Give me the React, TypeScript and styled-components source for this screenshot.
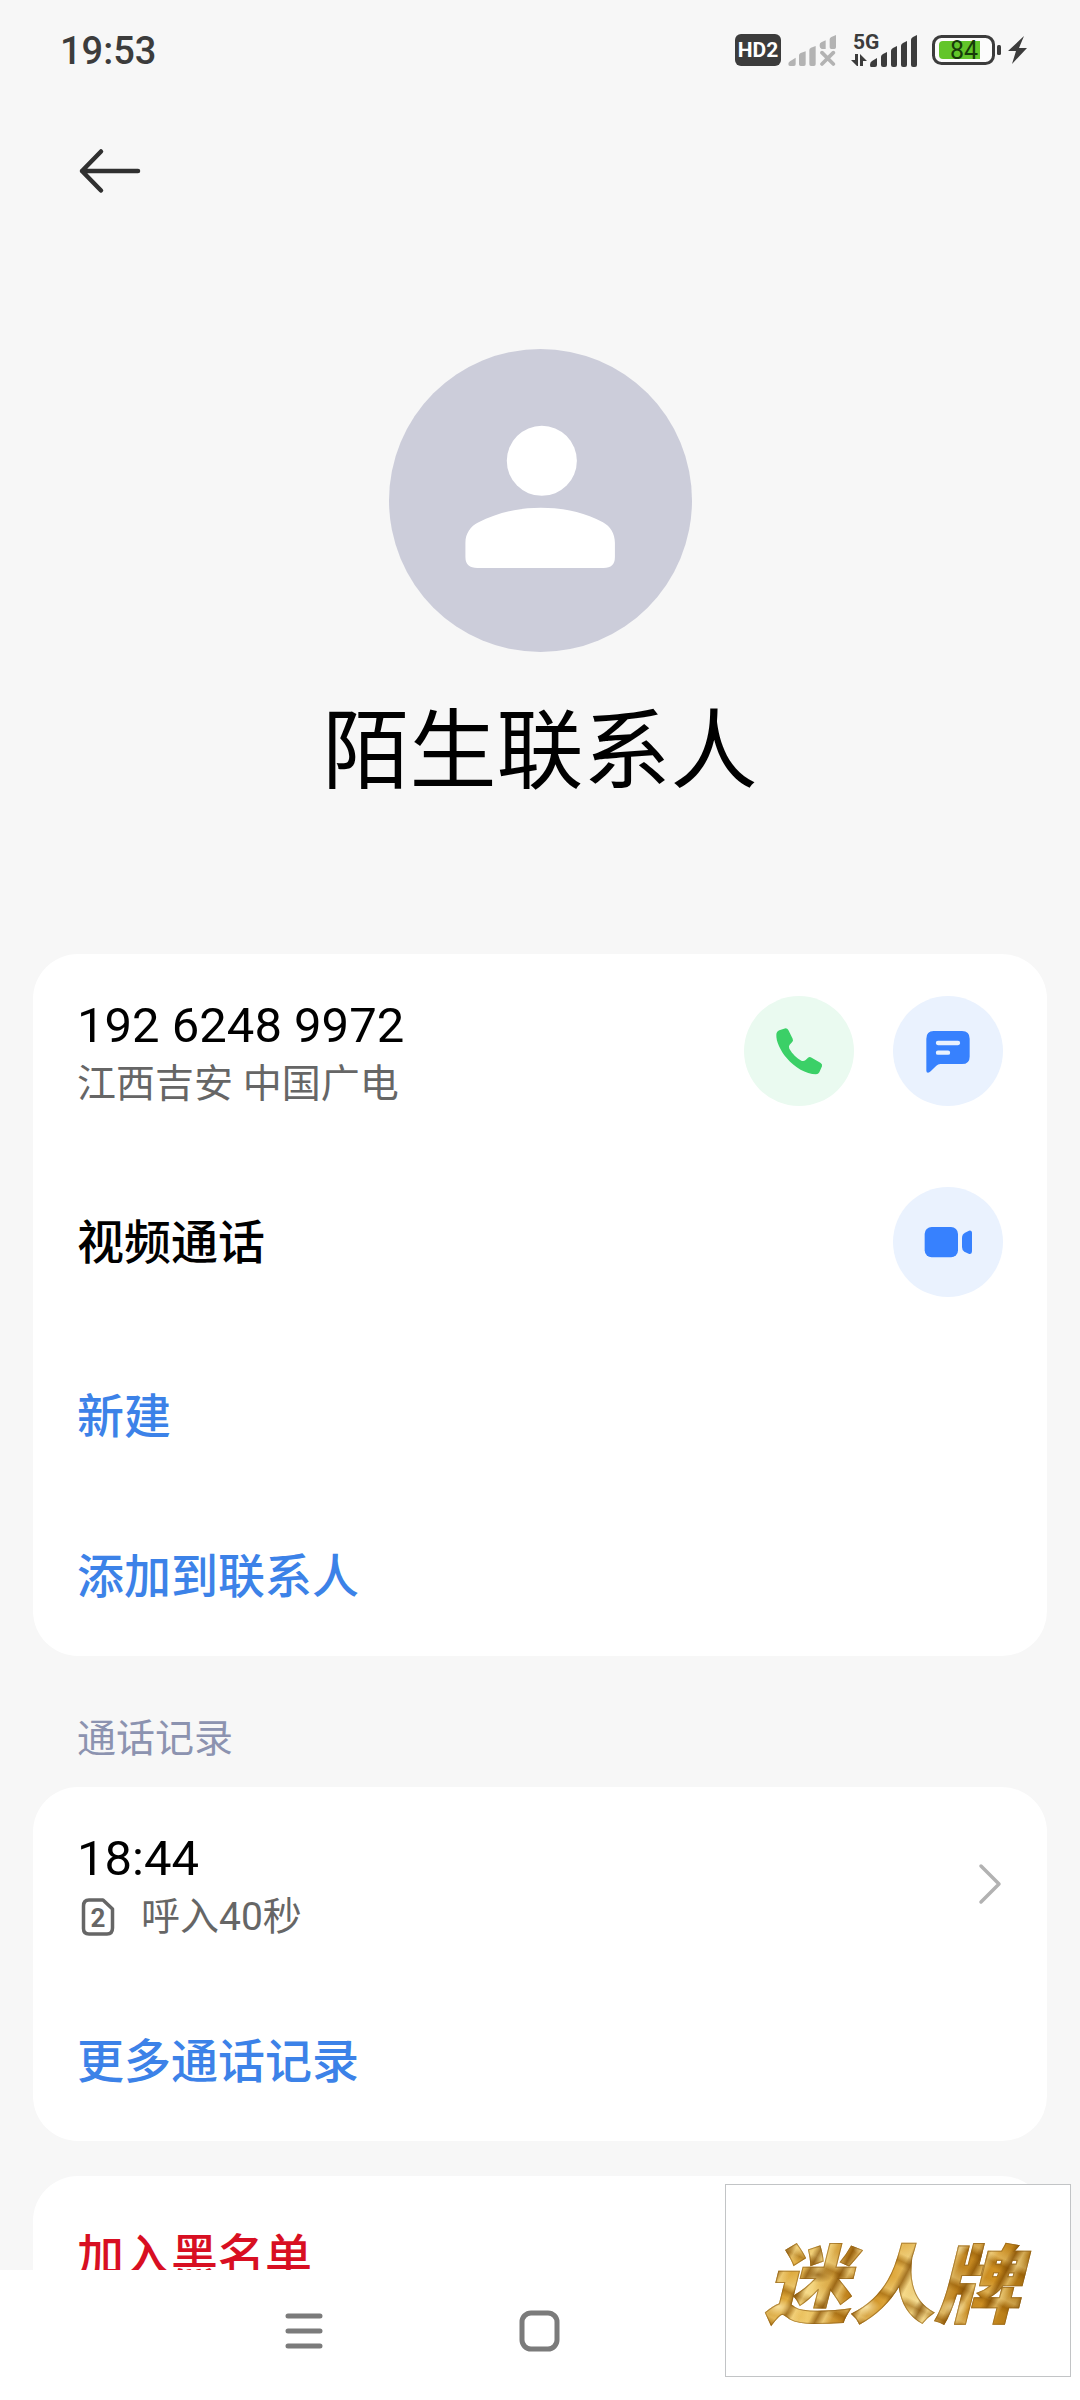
import React from "react";
import styled, { createGlobalStyle } from "styled-components";

const latin = `Roboto, "Noto Sans CJK SC", sans-serif`;
const ink = "#3c3c3c";

const GlobalStyle = createGlobalStyle`
  *, *::before, *::after { box-sizing: border-box; }
  body {
    margin: 0;
    background: #f7f7f7;
    color: #000;
    font-family: ${latin};
  }
  button { font: inherit; color: inherit; border: 0; background: none; padding: 0; cursor: pointer; }
  h1, h2, p { margin: 0; font-weight: 400; }
  svg { display: block; flex: none; }
`;

const Screen = styled.div`
  display: flex;
  flex-direction: column;
  height: 100vh;
  overflow: hidden;
`;

const StatusBar = styled.header`
  display: flex;
  align-items: center;
  justify-content: space-between;
  height: 100px;
  padding: 0 52px 0 60px;
  color: ${ink};
  flex: none;
`;

const Clock = styled.time`
  padding-top: 2px;
  font-size: 38px;
  line-height: 48px;
  font-weight: 500;
`;

const StatusIcons = styled.div`
  display: flex;
  align-items: center;
  gap: 7px;
`;

const HdBadge = styled.span`
  width: 46px;
  height: 32px;
  border-radius: 6px;
  background: ${ink};
  color: #fff;
  font-size: 21px;
  line-height: 32px;
  font-weight: 700;
  text-align: center;
`;

const TopBar = styled.div`
  display: flex;
  align-items: center;
  height: 142px;
  padding: 0 78px;
  flex: none;
`;

const Content = styled.main`
  flex: 1;
  min-height: 0;
  overflow: hidden;
`;

const Profile = styled.section`
  display: flex;
  flex-direction: column;
  align-items: center;
  gap: 36px;
  padding: 107px 33px 138px;
`;

const Name = styled.h1`
  font-size: 87px;
  line-height: 128px;
`;

const Card = styled.section`
  margin: 0 33px;
  border-radius: 45px;
  background: #fff;
  & + & { margin-top: 35px; }
`;

const Row = styled.div<{ $height: number }>`
  display: flex;
  align-items: center;
  justify-content: space-between;
  height: ${(p) => p.$height}px;
  padding: 0 44px;
`;

const RowButton = styled.button`
  display: flex;
  align-items: center;
  justify-content: space-between;
  width: 100%;
  height: 194px;
  padding: 0 44px;
  text-align: left;
`;

const ActionRow = styled.button<{ $color: string }>`
  display: block;
  width: 100%;
  height: 160px;
  padding: 2px 44px 0;
  text-align: left;
  font-size: 47px;
  line-height: 64px;
  font-weight: 500;
  color: ${(p) => p.$color};
`;

const Lines = styled.span`
  display: flex;
  flex-direction: column;
  padding-top: 2px;
`;

const Primary = styled.span`
  font-size: 49px;
  line-height: 64px;
`;

const Label = styled.span`
  padding-top: 2px;
  font-size: 47px;
  line-height: 64px;
  font-weight: 500;
`;

const Secondary = styled.span`
  display: flex;
  align-items: center;
  gap: 24px;
  font-size: 39px;
  line-height: 52px;
  color: #666;
`;

const SectionTitle = styled.h2`
  padding: 57px 77px 22px;
  font-size: 39px;
  line-height: 52px;
  color: #8c93b0;
`;

const Actions = styled.div`
  display: flex;
  gap: 39px;
`;

const RoundButton = styled.button<{ $tint: string }>`
  width: 110px;
  height: 110px;
  border-radius: 50%;
  background: ${(p) => p.$tint};
`;

const NavBar = styled.nav`
  display: grid;
  grid-template-columns: repeat(3, 235px);
  justify-content: center;
  height: 130px;
  padding-bottom: 9px;
  background: #fff;
  flex: none;
`;

const NavButton = styled.button`
  display: grid;
  place-items: center;
`;

const Watermark = styled.aside`
  position: absolute;
  right: 9px;
  bottom: 23px;
  display: grid;
  place-items: center;
  width: 346px;
  height: 193px;
  padding: 0 12px 4px 0;
  border: 1px solid #c2c4c6;
  background: #fff;
`;

const Brand = styled.span`
  padding: 0 12px;
  font-family: "Noto Sans CJK SC", sans-serif;
  font-size: 85px;
  line-height: 112px;
  font-weight: 900;
  font-style: italic;
  color: transparent;
  -webkit-text-stroke: 1px #8a5a1099;
  background:
    radial-gradient(ellipse 14px 9px at 30% 40%, #fff0b8cc, transparent),
    radial-gradient(ellipse 16px 8px at 60% 70%, #7a4600aa, transparent),
    repeating-linear-gradient(118deg, #7a460000 0 9px, #7a460099 15px, #ffe9a077 22px, #7a460000 29px),
    repeating-linear-gradient(24deg, #7a460000 0 11px, #8a520077 17px, #fff0b055 24px, #7a460000 37px),
    linear-gradient(100deg, #a96f0c, #d9a030 14%, #efca6c 24%, #b8760f 38%, #dfa83c 50%, #f0d587 60%, #c08420 72%, #cf9022 84%, #925d06);
  background-size: 88px 60px, 110px 74px, auto, auto, auto;
  -webkit-background-clip: text;
  background-clip: text;
`;

const WeakSignal = () => (
  <svg width="48" height="32" viewBox="261 72 144 96" fill="#b3b3b3" aria-hidden="true">
    <path d="M262 162q0-5 5-8l17-11v20q0 5-5 5h-12q-5 0-5-6zM294 136q0-5 5-7l15-5v39q0 5-5 5h-10q-5 0-5-5zM325 120q0-5 5-7l14-5v55q0 5-5 5h-9q-5 0-5-5z" />
    <path d="M356 104q0-5 5-7l13-6v26h-12q-6-3-6-8zM386 88q0-5 5-7l14-6v37q0 5-5 5h-9q-5 0-5-5z" />
    <path d="M363 128l34 34M397 128l-34 34" stroke="#b3b3b3" strokeWidth="11" strokeLinecap="round" />
  </svg>
);

const StrongSignal = () => (
  <svg width="68" height="52" viewBox="0 -8 68 52" fill={ink} aria-label="5G">
    <text x="3" y="17" fontSize="21" fontWeight="700" fontFamily="Roboto, sans-serif">5G</text>
    <path d="M1 28h4v-6h3v12H7zM10 22l7 7h-4v5h-3z" />
    <path d="M20 33q0-3 2-4l5-3v7q0 2-2 2h-4q-1 0-1-2zM31 25q0-2 2-3l4-2v13q0 2-2 2h-2q-2 0-2-2zM41 19q0-2 2-3l4-2v19q0 2-2 2h-2q-2 0-2-2zM51 14q0-2 2-3l4-2v24q0 2-2 2h-2q-2 0-2-2zM61 8q0-2 2-3l4-2v30q0 2-2 2h-2q-2 0-2-2z" />
  </svg>
);

const Battery = () => (
  <svg width="96" height="32" viewBox="0 0 96 32" aria-label="84%">
    <rect x="1.5" y="2.5" width="60" height="27" rx="8" fill="#fcfcfc" stroke={ink} strokeWidth="3" />
    <path d="M11 7h37v18H11q-4 0-4-4V11q0-4 4-4z" fill="#62c52a" />
    <text x="32" y="25" textAnchor="middle" fontSize="25" fontFamily="Roboto, sans-serif" fill="#183b0a">84</text>
    <rect x="65" y="11" width="4" height="10" rx="1.5" fill={ink} />
    <path d="M92 2L76 17h8l-4 13 15-16h-8z" fill={ink} />
  </svg>
);

const BackArrow = () => (
  <svg width="64" height="48" viewBox="0 0 64 48" fill="none" stroke="#303030" strokeWidth="4.5" strokeLinecap="round" strokeLinejoin="round">
    <path d="M60 24H4M23 4.500L4 24l19 19.500" />
  </svg>
);

const Avatar = () => (
  <svg width="303" height="303" viewBox="85 57 908 908" role="img" aria-label="头像">
    <circle cx="539" cy="511" r="454" fill="#cccdda" />
    <circle cx="543" cy="392" r="105" fill="#fff" />
    <path d="M314 638C314 609 330 588 352 577C411 547 470 533 540 533C610 533 667 546 726 576C748 588 762 610 762 638V680Q762 713 728 713H350Q314 713 314 680Z" fill="#fff" />
  </svg>
);

const PhoneIcon = () => (
  <svg width="110" height="110" viewBox="132 167 330 330" fill="#3bd067">
    <path d="M229 283C229 277 232 273 238 270L252 265Q261 262 265 269L278 295Q281 301 276 306L269 313Q265 318 268 325C277 341 290 353 304 361Q311 364 317 359L324 352Q329 348 335 352L361 367Q368 371 366 378L358 396Q355 402 348 402C318 401 284 382 260 353C241 330 228 303 229 283Z" />
  </svg>
);

const MessageIcon = () => (
  <svg width="110" height="110" viewBox="579 167 330 330" fill="#3781fe">
    <path d="M701 272H786Q809 272 809 295V349Q809 371 786 371H721Q714 371 709 376L692 393Q688 397 684 397Q679 397 679 391V295Q679 272 701 272Z" />
    <path d="M714 308H774M714 337H744" stroke="#eaf2fe" strokeWidth="13" strokeLinecap="round" />
  </svg>
);

const VideoIcon = () => (
  <svg width="110" height="110" viewBox="579 741 330 330" fill="#3781fe">
    <rect x="674" y="861" width="100" height="91" rx="21" />
    <path d="M786 893Q786 883 795 878L807 872Q816 870 816 880V934Q816 944 806 941L793 935Q786 930 786 921Z" />
  </svg>
);

const SimIcon = () => (
  <svg width="40" height="40" viewBox="0 0 40 40" fill="none" stroke="#666" strokeWidth="3.500">
    <path d="M12 3H26L35.500 12V31Q35.500 37 30 37H12Q6.500 37 6.500 31.500V9Q6.500 3 12 3Z" strokeLinejoin="round" />
    <text x="21" y="30" textAnchor="middle" fontSize="26" fontWeight="700" fontFamily="Roboto, sans-serif" fill="#666" stroke="none">2</text>
  </svg>
);

const Chevron = () => (
  <svg width="26" height="42" viewBox="0 0 26 42" fill="none" stroke="#b2b2b2" strokeWidth="3.500" strokeLinecap="round" strokeLinejoin="round">
    <path d="M4 3L22 21L4 39" />
  </svg>
);

const MenuIcon = () => (
  <svg width="40" height="40" viewBox="0 0 40 40" stroke="#7b7b7b" strokeWidth="5" strokeLinecap="round">
    <path d="M3 5H35M3 20H35M3 35H35" />
  </svg>
);

const HomeIcon = () => (
  <svg width="42" height="42" viewBox="0 0 42 42" fill="none" stroke="#7b7b7b" strokeWidth="5">
    <rect x="3" y="3" width="35" height="36" rx="9" />
  </svg>
);

export default function App() {
  return (
    <Screen>
      <GlobalStyle />
      <StatusBar>
        <Clock>19:53</Clock>
        <StatusIcons>
          <HdBadge>HD2</HdBadge>
          <WeakSignal />
          <span />
          <StrongSignal />
          <span />
          <Battery />
        </StatusIcons>
      </StatusBar>
      <TopBar>
        <button type="button" aria-label="返回"><BackArrow /></button>
      </TopBar>
      <Content>
        <Profile>
          <Avatar />
          <Name>陌生联系人</Name>
        </Profile>
        <Card>
          <Row $height={194}>
            <Lines>
              <Primary>192 6248 9972</Primary>
              <Secondary>江西吉安 中国广电</Secondary>
            </Lines>
            <Actions>
              <RoundButton type="button" aria-label="拨打电话" $tint="#eafaf0"><PhoneIcon /></RoundButton>
              <RoundButton type="button" aria-label="发送短信" $tint="#eaf2fe"><MessageIcon /></RoundButton>
            </Actions>
          </Row>
          <Row $height={188}>
            <Label>视频通话</Label>
            <RoundButton type="button" aria-label="视频通话" $tint="#eaf2fe"><VideoIcon /></RoundButton>
          </Row>
          <ActionRow type="button" $color="#3c82e8">新建</ActionRow>
          <ActionRow type="button" $color="#3c82e8">添加到联系人</ActionRow>
        </Card>
        <SectionTitle>通话记录</SectionTitle>
        <Card>
          <RowButton type="button">
            <Lines>
              <Primary>18:44</Primary>
              <Secondary><SimIcon />呼入40秒</Secondary>
            </Lines>
            <Chevron />
          </RowButton>
          <ActionRow type="button" $color="#3c82e8">更多通话记录</ActionRow>
        </Card>
        <Card>
          <ActionRow type="button" $color="#d80f22">加入黑名单</ActionRow>
        </Card>
      </Content>
      <NavBar>
        <NavButton type="button" aria-label="最近任务"><MenuIcon /></NavButton>
        <NavButton type="button" aria-label="主屏幕"><HomeIcon /></NavButton>
      </NavBar>
      <Watermark><Brand>迷人牌</Brand></Watermark>
    </Screen>
  );
}
